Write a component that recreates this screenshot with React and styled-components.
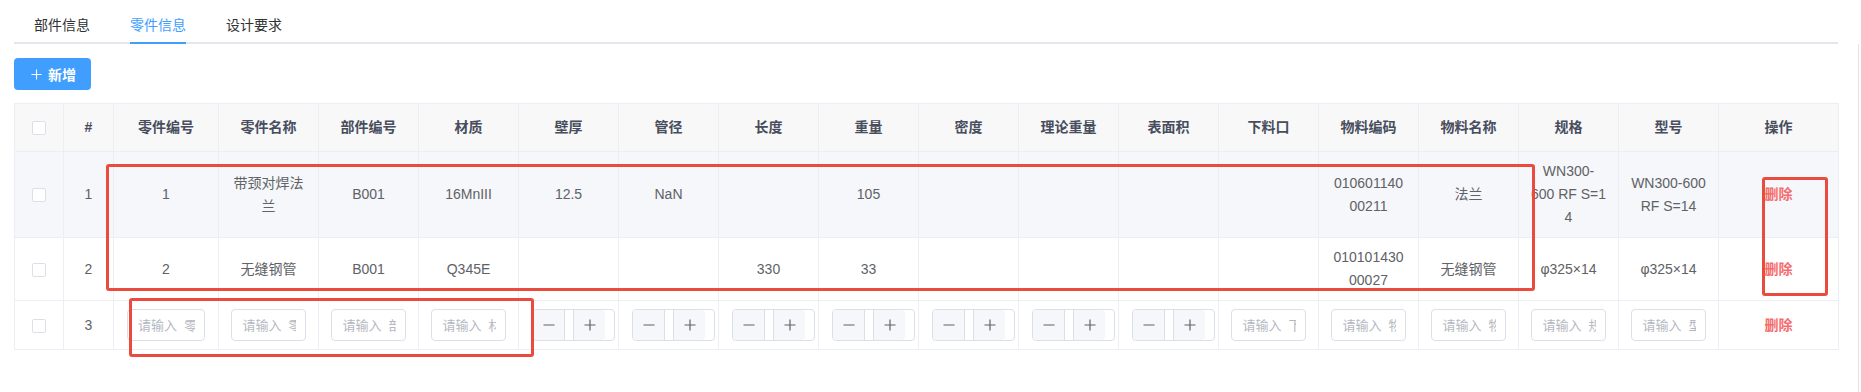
import React from 'react';
import styled, { createGlobalStyle } from 'styled-components';

const GlobalStyle = createGlobalStyle`
  html, body {
    margin: 0;
    padding: 0;
    background: #fff;
  }
  body {
    font-family: "Liberation Sans", "Noto Sans CJK SC", sans-serif;
    font-size: 14px;
    color: #606266;
  }
  * {
    box-sizing: border-box;
  }
`;

const Page = styled.div`
  position: relative;
  display: flex;
  width: 1861px;
  height: 392px;
  overflow: hidden;
`;

const Main = styled.div`
  width: 1824px;
  margin-left: 14px;
  padding-top: 4px;
`;

const RightRail = styled.div`
  width: 1px;
  margin: 44px 0 0 20px;
  background: #e4e4e4;
`;

const TabBar = styled.div`
  display: flex;
  height: 40px;
  box-shadow: inset 0 -2px 0 #e4e7ed;
`;

const Tab = styled.div`
  display: flex;
  padding: 0 20px;
`;

const TabLabel = styled.span`
  display: flex;
  align-items: center;
  font-size: 14px;
  color: ${p => (p.$active ? '#409eff' : '#303133')};
  box-shadow: ${p => (p.$active ? 'inset 0 -2px 0 #409eff' : 'none')};
`;

const Toolbar = styled.div`
  display: flex;
  margin-top: 14px;
  margin-bottom: 13px;
`;

const AddButton = styled.button`
  display: flex;
  align-items: center;
  gap: 6px;
  width: 77px;
  height: 32px;
  padding: 0 0 0 17px;
  border: none;
  border-radius: 4px;
  background: #409eff;
  color: #fff;
  font-family: inherit;
  font-size: 14px;
  font-weight: bold;
`;

const Table = styled.table`
  width: 1824px;
  table-layout: fixed;
  border-collapse: separate;
  border-spacing: 0;
  border-top: 1px solid #ebeef5;
  border-left: 1px solid #ebeef5;
`;

const Th = styled.th`
  padding: 12px 0;
  line-height: 23px;
  font-size: 14px;
  font-weight: bold;
  color: #474d5c;
  background: #f8f8f9;
  text-align: center;
  border-right: 1px solid #ebeef5;
  border-bottom: 1px solid #ebeef5;
  white-space: nowrap;
`;

const Td = styled.td`
  padding: 8px 0;
  line-height: 23px;
  font-size: 14px;
  color: #606266;
  text-align: center;
  vertical-align: middle;
  white-space: nowrap;
  background: ${p => (p.$hover ? '#f5f7fa' : '#fff')};
  border-right: 1px solid #ebeef5;
  border-bottom: 1px solid #ebeef5;
`;

const Line = styled.div`
  line-height: 23px;
`;

const Checkbox = styled.span`
  display: inline-block;
  width: 14px;
  height: 14px;
  vertical-align: middle;
  border: 1px solid #dcdfe6;
  border-radius: 2px;
  background: #fff;
`;

const TextInput = styled.input`
  display: block;
  width: 75%;
  height: 32px;
  margin: 0 auto;
  padding: 0 9px 0 10px;
  border: 1px solid #dcdfe6;
  border-radius: 4px;
  background: #fff;
  font-family: inherit;
  font-size: 13px;
  color: #606266;
  outline: none;

  &::placeholder {
    color: #b4b8bf;
  }
`;

const NumberBox = styled.div`
  display: flex;
  width: 83px;
  height: 32px;
  margin: 0 auto;
  transform: translateX(5px);
  border: 1px solid #dcdfe6;
  border-radius: 4px;
  background: #fff;
  overflow: hidden;
`;

const StepButton = styled.span`
  display: flex;
  align-items: center;
  justify-content: center;
  width: 32px;
  background: #f5f7fa;
  color: #606266;
  border-right: ${p => (p.$side === 'left' ? '1px solid #dcdfe6' : 'none')};
  border-left: ${p => (p.$side === 'right' ? '1px solid #dcdfe6' : 'none')};
  border-radius: ${p => (p.$side === 'right' ? '0 4px 4px 0' : '0')};
`;

const NumberField = styled.span`
  flex: 1;
`;

const NumberTail = styled.span`
  width: 9px;
`;

const DeleteLink = styled.span`
  color: #f56c6c;
  font-size: 14px;
  font-weight: 600;
`;

const Mark = styled.div`
  position: absolute;
  left: ${p => p.$x}px;
  top: ${p => p.$y}px;
  width: ${p => p.$w}px;
  height: ${p => p.$h}px;
  border: 3px solid #eb4b3f;
  border-radius: 3px;
  pointer-events: none;
`;

const PlusIcon = ({ size = 12 }) => (
  <svg width={size} height={size} viewBox="0 0 12 12">
    <path d="M6 0.5V11.5M0.5 6H11.5" stroke="currentColor" strokeWidth="1.2" fill="none" />
  </svg>
);

const MinusIcon = () => (
  <svg width="12" height="12" viewBox="0 0 12 12">
    <path d="M0.5 6H11.5" stroke="currentColor" strokeWidth="1.2" fill="none" />
  </svg>
);

const columns = [
  { key: 'sel', width: 49 },
  { key: 'idx', label: '#', width: 50 },
  { key: 'partNo', label: '零件编号', width: 105, editor: 'text' },
  { key: 'partName', label: '零件名称', width: 100, editor: 'text' },
  { key: 'compNo', label: '部件编号', width: 100, editor: 'text' },
  { key: 'material', label: '材质', width: 100, editor: 'text' },
  { key: 'wall', label: '壁厚', width: 100, editor: 'number' },
  { key: 'dia', label: '管径', width: 100, editor: 'number' },
  { key: 'len', label: '长度', width: 100, editor: 'number' },
  { key: 'weight', label: '重量', width: 100, editor: 'number' },
  { key: 'density', label: '密度', width: 100, editor: 'number' },
  { key: 'theory', label: '理论重量', width: 100, editor: 'number' },
  { key: 'area', label: '表面积', width: 100, editor: 'number' },
  { key: 'cut', label: '下料口', width: 100, editor: 'text' },
  { key: 'matCode', label: '物料编码', width: 100, editor: 'text' },
  { key: 'matName', label: '物料名称', width: 100, editor: 'text' },
  { key: 'spec', label: '规格', width: 100, editor: 'text' },
  { key: 'model', label: '型号', width: 100, editor: 'text' },
  { key: 'op', label: '操作', width: 120 },
];

const rows = [
  {
    idx: 1,
    hover: true,
    partNo: '1',
    partName: ['带颈对焊法', '兰'],
    compNo: 'B001',
    material: '16MnIII',
    wall: '12.5',
    dia: 'NaN',
    weight: '105',
    matCode: ['010601140', '00211'],
    matName: '法兰',
    spec: ['WN300-', '600 RF S=1', '4'],
    model: ['WN300-600', 'RF S=14'],
  },
  {
    idx: 2,
    partNo: '2',
    partName: '无缝钢管',
    compNo: 'B001',
    material: 'Q345E',
    len: '330',
    weight: '33',
    matCode: ['010101430', '00027'],
    matName: '无缝钢管',
    spec: 'φ325×14',
    model: 'φ325×14',
  },
  { idx: 3, editing: true },
];

function renderValue(value) {
  if (Array.isArray(value)) {
    return value.map((line, i) => <Line key={i}>{line}</Line>);
  }
  return value;
}

function renderCell(col, row) {
  if (col.key === 'sel') return <Checkbox />;
  if (col.key === 'idx') return row.idx;
  if (col.key === 'op') return <DeleteLink>删除</DeleteLink>;
  if (row.editing) {
    if (col.editor === 'number') {
      return (
        <NumberBox>
          <StepButton $side="left"><MinusIcon /></StepButton>
          <NumberField />
          <StepButton $side="right"><PlusIcon /></StepButton>
          <NumberTail />
        </NumberBox>
      );
    }
    return <TextInput readOnly placeholder={`请输入\u00a0\u00a0${col.label}`} />;
  }
  return renderValue(row[col.key]);
}

export default function App() {
  return (
    <>
      <GlobalStyle />
      <Page>
        <Main>
          <TabBar>
            <Tab><TabLabel>部件信息</TabLabel></Tab>
            <Tab><TabLabel $active>零件信息</TabLabel></Tab>
            <Tab><TabLabel>设计要求</TabLabel></Tab>
          </TabBar>
          <Toolbar>
            <AddButton>
              <PlusIcon size={11} />
              新增
            </AddButton>
          </Toolbar>
          <Table>
            <colgroup>
              {columns.map(col => (
                <col key={col.key} style={{ width: col.width }} />
              ))}
            </colgroup>
            <thead>
              <tr>
                {columns.map(col => (
                  <Th key={col.key}>{col.key === 'sel' ? <Checkbox /> : col.label}</Th>
                ))}
              </tr>
            </thead>
            <tbody>
              {rows.map(row => (
                <tr key={row.idx}>
                  {columns.map(col => (
                    <Td key={col.key} $hover={row.hover}>
                      {renderCell(col, row)}
                    </Td>
                  ))}
                </tr>
              ))}
            </tbody>
          </Table>
        </Main>
        <RightRail />
        <Mark $x={106} $y={164} $w={1429} $h={127} />
        <Mark $x={1762} $y={177} $w={66} $h={119} />
        <Mark $x={129} $y={298} $w={405} $h={59} />
      </Page>
    </>
  );
}
